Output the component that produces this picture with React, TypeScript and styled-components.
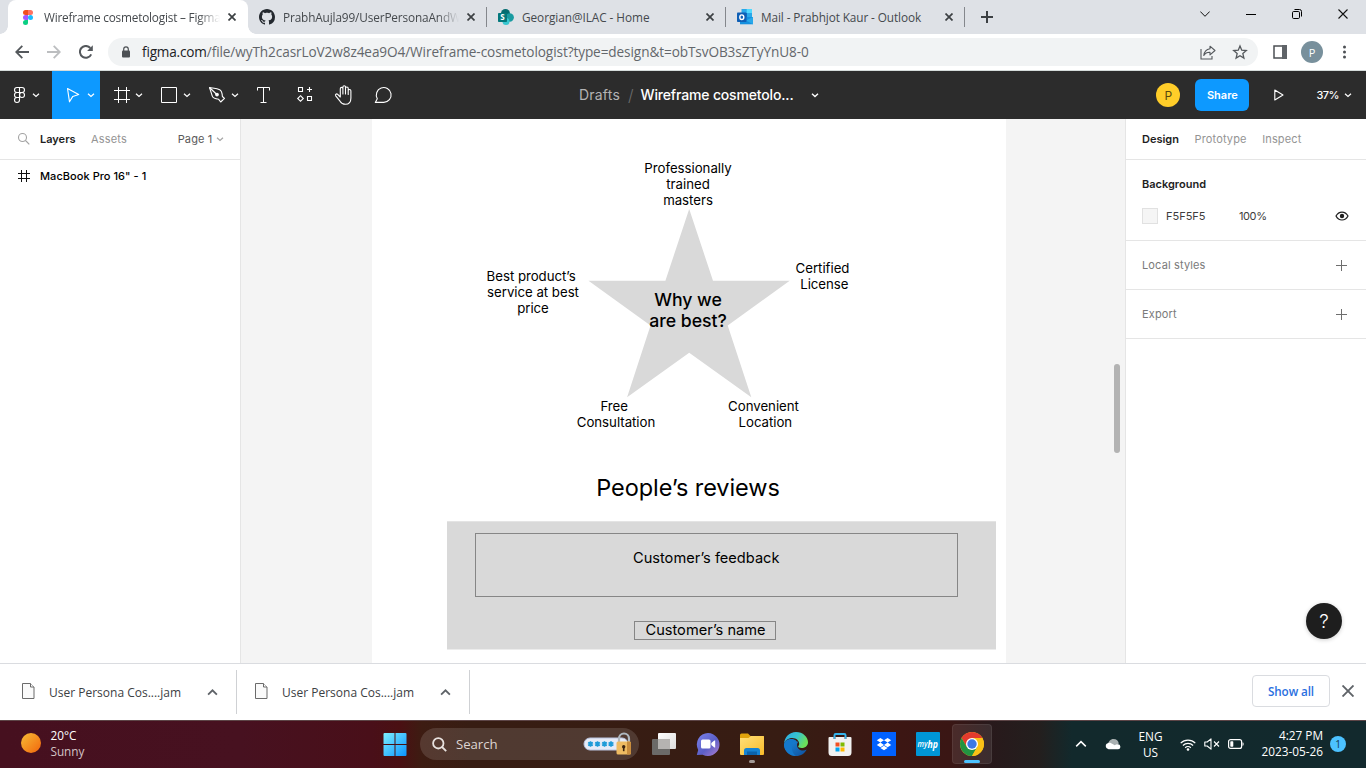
import React from "react";
import styled, { createGlobalStyle, css } from "styled-components";

const ui = `"Open Sans", "Noto Sans", sans-serif`;
const inter = `Inter, "Liberation Sans", sans-serif`;

const GlobalStyle = createGlobalStyle`
  *, *::before, *::after { box-sizing: border-box; }
  body { margin: 0; overflow: hidden; background: #fff; }
  svg { display: block; flex: none; }
`;

const Screen = styled.div`
  display: flex;
  flex-direction: column;
  width: 1366px;
  height: 768px;
  overflow: hidden;
  font-family: ${ui};
`;

/* ---------- Browser chrome ---------- */

const TabStrip = styled.header`
  display: flex;
  height: 34px;
  padding-left: 8px;
  background: #dee1e6;
`;

const Tab = styled.div<{ $active?: boolean }>`
  position: relative;
  display: flex;
  align-items: center;
  width: ${(p) => (p.$active ? 240 : 239)}px;
  padding: 0 12px 0 ${(p) => (p.$active ? 12 : 11)}px;
  ${(p) =>
    p.$active
      ? css`
          background: #fff;
          border-radius: 8px 8px 0 0;
          &::before,
          &::after {
            content: "";
            position: absolute;
            bottom: 0;
            width: 8px;
            height: 8px;
          }
          &::before {
            left: -8px;
            background: radial-gradient(circle at 0 0, transparent 7.5px, #fff 8px);
          }
          &::after {
            right: -8px;
            background: radial-gradient(circle at 100% 0, transparent 7.5px, #fff 8px);
          }
        `
      : css`
          &::after {
            content: "";
            position: absolute;
            right: 0;
            top: 7px;
            width: 1px;
            height: 20px;
            background: #84878c;
          }
        `}
`;

const TabTitle = styled.span<{ $fade?: boolean; $track?: number }>`
  flex: 1;
  min-width: 0;
  margin: 0 8px;
  overflow: hidden;
  white-space: nowrap;
  font-size: 11.8px;
  line-height: 20px;
  letter-spacing: ${(p) => p.$track ?? -0.1}px;
  color: #45494d;
  ${(p) =>
    p.$fade &&
    css`
      mask-image: linear-gradient(90deg, #000 calc(100% - 22px), transparent);
    `}
`;

const NewTab = styled.div`
  display: flex;
  align-items: center;
  padding-left: 16px;
`;

const WindowControls = styled.div`
  display: flex;
  align-items: center;
  height: 28px;
  margin-left: auto;
`;

const WindowButton = styled.div`
  display: flex;
  align-items: center;
  justify-content: center;
  width: 46px;
  height: 28px;
`;

const AddressBar = styled.div`
  display: flex;
  align-items: center;
  height: 37px;
  padding: 0 14px 0 6px;
  background: #fff;
  border-bottom: 1px solid #d5dcdb;
`;

const NavButton = styled.div`
  display: flex;
  align-items: center;
  justify-content: center;
  width: 32px;
  height: 28px;
`;

const Omnibox = styled.div`
  display: flex;
  align-items: center;
  width: 1150px;
  height: 28px;
  margin: 0 15px 0 6px;
  padding: 0 10px 0 13px;
  border-radius: 14px;
  background: #f1f3f4;
`;

const Url = styled.span`
  flex: 1;
  margin-left: 11px;
  font-size: 13.6px;
  letter-spacing: -0.09px;
  line-height: 20px;
  white-space: nowrap;
  color: #63676b;
`;

const Host = styled.span`
  letter-spacing: -0.18px;
  color: #202124;
`;

const OmniActions = styled.div`
  display: flex;
  align-items: center;
  gap: 16px;
`;

const Profile = styled.div`
  display: flex;
  align-items: center;
  justify-content: center;
  width: 22px;
  height: 22px;
  margin: 0 20px 0 14px;
  border-radius: 50%;
  background: #78909c;
  color: #fff;
  font-size: 11px;
`;

/* ---------- Editor toolbar ---------- */

const EditorBar = styled.div`
  display: grid;
  grid-template-columns: 560px 1fr auto;
  height: 48px;
  background: #2c2c2c;
  color: #fff;
  font-family: ${inter};
`;

const Tools = styled.div`
  display: flex;
`;

const DropTool = styled.div<{ $active?: boolean; $menu?: boolean }>`
  display: flex;
  align-items: center;
  gap: ${(p) => (p.$menu ? 2 : 3)}px;
  width: ${(p) => (p.$menu ? 52 : 48)}px;
  padding-left: ${(p) => (p.$menu ? 10 : 12)}px;
  background: ${(p) => (p.$active ? "#0d99ff" : "transparent")};
`;

const Tool = styled.div`
  display: flex;
  align-items: center;
  justify-content: center;
  width: 40px;
`;

const FileTitle = styled.div`
  display: flex;
  align-items: center;
  padding: 0 0 1px 19px;
  font-size: 14px;
  white-space: nowrap;
`;

const Folder = styled.span`
  letter-spacing: 0.2px;
  color: #b3b3b3;
`;

const Slash = styled.span`
  margin: 0 7px 0 8px;
  color: #6c6c6c;
  font-size: 16px;
  font-weight: 300;
`;

const FileName = styled.span`
  margin-right: 17px;
  font-weight: 500;
  letter-spacing: -0.16px;
`;

const BarActions = styled.div`
  display: flex;
  align-items: center;
  justify-content: flex-end;
  padding-right: 14px;
`;

const UserBadge = styled.div`
  display: flex;
  align-items: center;
  justify-content: center;
  width: 24px;
  height: 24px;
  border-radius: 50%;
  background: #ffcd29;
  color: #58470e;
  font-size: 12px;
`;

const ShareButton = styled.div`
  display: flex;
  align-items: center;
  justify-content: center;
  width: 54px;
  height: 32px;
  margin: 0 25px 0 15px;
  border-radius: 6px;
  background: #0d99ff;
  font-size: 11px;
  font-weight: 600;
`;

const Zoom = styled.span`
  margin: 0 5px 0 32px;
  font-size: 11px;
  font-weight: 500;
  letter-spacing: -0.5px;
`;

/* ---------- Workspace ---------- */

const Workspace = styled.main`
  display: flex;
  height: 544px;
  font-family: ${inter};
`;

const LeftPanel = styled.aside`
  width: 241px;
  border-right: 1px solid #e5e5e5;
`;

const PanelTabs = styled.div`
  display: flex;
  align-items: center;
  height: 41px;
  padding: 0 16px;
  border-bottom: 1px solid #e5e5e5;
`;

const PanelTab = styled.span<{ $active?: boolean }>`
  margin-right: 15.5px;
  font-size: 11px;
  line-height: 16px;
  font-weight: ${(p) => (p.$active ? 600 : 400)};
  letter-spacing: ${(p) => (p.$active ? 0 : 0.15)}px;
  color: ${(p) => (p.$active ? "#1e1e1e" : "#949494")};
`;

const SearchSlot = styled.div`
  margin-right: 10px;
`;

const PageName = styled.span`
  margin: 0 3.5px 0 auto;
  font-size: 11px;
  letter-spacing: 0.15px;
  color: #5a5a5a;
`;

const LayerRow = styled.div`
  display: flex;
  align-items: center;
  gap: 10px;
  height: 32px;
  padding-left: 18px;
  font-size: 11px;
  font-weight: 500;
  letter-spacing: 0.05px;
  color: #000;
`;

const Canvas = styled.section`
  position: relative;
  width: 884px;
  overflow: hidden;
  background: #f4f4f4;
`;

const Artboard = styled.div`
  position: absolute;
  left: 131px;
  top: 0;
  width: 634px;
  height: 544px;
  background: #fff;
`;

const StarShape = styled.svg`
  position: absolute;
  left: 216px;
  top: 90px;
`;

const Label = styled.div<{ $x: number; $y: number }>`
  position: absolute;
  left: ${(p) => p.$x}px;
  top: ${(p) => p.$y}px;
  transform: translateX(-50%);
  white-space: pre;
  text-align: center;
  font-size: 13.25px;
  line-height: 16px;
  letter-spacing: -0.03px;
  color: #000;
`;

const StarTitle = styled(Label)`
  font-size: 17.7px;
  line-height: 21.3px;
  font-weight: 450;
`;

const SectionTitle = styled(Label)`
  font-size: 23.5px;
  line-height: 30px;
  letter-spacing: -0.08px;
`;

const ReviewCard = styled.div`
  position: absolute;
  left: 75px;
  top: 402px;
  display: flex;
  flex-direction: column;
  align-items: flex-start;
  width: 549px;
  height: 129px;
  padding: 12px 0 0 28px;
  border-top: 1px solid #e4e4e4;
  border-bottom: 1px solid #ececec;
  background: #d9d9d9;
  font-size: 14.6px;
  line-height: 18px;
  color: #000;
`;

const Feedback = styled.div`
  width: 483px;
  height: 64px;
  margin-top: -1px;
  padding: 15px 0 0 157px;
  border: 1px solid #868686;
`;

const Customer = styled.div`
  width: 142px;
  height: 19px;
  margin: 24px 0 0 159px;
  padding-left: 1px;
  border: 1px solid #868686;
  line-height: 17px;
  text-align: center;
`;

const ScrollThumb = styled.div`
  position: absolute;
  right: 5px;
  top: 245px;
  width: 6px;
  height: 89px;
  border-radius: 3px;
  background: #b3b3b3;
`;

const RightPanel = styled.aside`
  position: relative;
  width: 241px;
  border-left: 1px solid #e5e5e5;
  font-size: 11px;
`;

const Section = styled.div`
  display: flex;
  align-items: center;
  justify-content: space-between;
  height: 49px;
  padding: 0 19px 0 16px;
  border-bottom: 1px solid #e5e5e5;
  letter-spacing: 0.14px;
  color: #7a7a7a;
`;

const BackgroundSection = styled.div`
  height: 81px;
  padding: 16px 16px 0;
  border-bottom: 1px solid #e5e5e5;
`;

const SectionHeading = styled.div`
  line-height: 16px;
  font-weight: 600;
  color: #1e1e1e;
`;

const ColorRow = styled.div`
  display: flex;
  align-items: center;
  margin-top: 16px;
  height: 16px;
  color: #3d3d3d;
`;

const Swatch = styled.div`
  width: 16px;
  height: 16px;
  border: 1px solid #e1e1e1;
  background: #f5f5f5;
`;

const Hex = styled.span`
  width: 73px;
  margin-left: 8px;
`;

const Opacity = styled.span`
  flex: 1;
  letter-spacing: -0.4px;
`;

const HelpButton = styled.div`
  position: absolute;
  right: 24px;
  bottom: 24px;
  display: flex;
  align-items: center;
  justify-content: center;
  width: 36px;
  height: 36px;
  border-radius: 50%;
  background: #1e1e1e;
  box-shadow: 0 1px 4px rgba(0, 0, 0, 0.2);
  color: #fff;
  font-size: 19px;
  font-weight: 300;
`;

/* ---------- Downloads shelf ---------- */

const Shelf = styled.div`
  display: flex;
  align-items: center;
  height: 57px;
  padding-right: 12px;
  border-top: 1px solid #dadce0;
  background: #fff;
`;

const Download = styled.div<{ $first?: boolean }>`
  display: flex;
  align-items: center;
  width: ${(p) => (p.$first ? 237 : 233)}px;
  height: 44px;
  padding-left: ${(p) => (p.$first ? 22 : 18)}px;
  border-right: 1px solid #cfd1d4;
`;

const DownloadName = styled.span`
  flex: 1;
  margin-left: 14px;
  font-size: 12px;
  color: #3c4043;
`;

const ChevronSlot = styled.div`
  margin-right: 18px;
`;

const FileSlot = styled.div`
  padding-bottom: 2px;
`;

const ShelfActions = styled.div`
  display: flex;
  align-items: center;
  gap: 12px;
  margin: -3px 0 0 auto;
`;

const ShowAll = styled.div`
  display: flex;
  align-items: center;
  justify-content: center;
  width: 78px;
  height: 32px;
  border: 1px solid #dadce0;
  border-radius: 4px;
  color: #2a6fe0;
  font-size: 11.7px;
  font-weight: 600;
  letter-spacing: -0.1px;
`;

/* ---------- Taskbar ---------- */

const Taskbar = styled.footer`
  display: grid;
  grid-template-columns: 373px 1fr 340px;
  height: 48px;
  border-top: 1px solid #5d4547;
  color: #fff;
  background: linear-gradient(
    90deg,
    #46101f 0,
    #471120 240px,
    #490f19 370px,
    #4a1013 400px,
    #3d1c12 422px,
    #371d13 470px,
    #371c13 800px,
    #3c1613 900px,
    #3a1614 950px,
    #28191b 990px,
    #231f1e 1040px,
    #12292c 1072px,
    #12292d 1366px
  );
`;

const Weather = styled.div`
  display: flex;
  align-items: center;
  gap: 9.500px;
  padding: 0 0 3px 21px;
`;

const TwoLines = styled.div<{ $align?: string; $dimSecond?: boolean }>`
  display: flex;
  flex-direction: column;
  text-align: ${(p) => p.$align ?? "left"};
  font-size: 11.8px;
  line-height: 16px;
  letter-spacing: -0.05px;
  span:last-child {
    color: ${(p) => (p.$dimSecond ? "#d3c4c7" : "#fff")};
  }
`;

const Clock = styled(TwoLines)`
  padding-bottom: 3px;
  letter-spacing: 0;
`;

const Apps = styled.div`
  display: flex;
  align-items: center;
  padding-bottom: 1px;
`;

const AppSlot = styled.div<{ $open?: boolean; $active?: boolean }>`
  position: relative;
  display: flex;
  align-items: center;
  justify-content: center;
  width: 44px;
  height: 46px;
  ${(p) =>
    p.$active &&
    css`
      &::before {
        content: "";
        position: absolute;
        inset: 3px 2px 3px;
        border: 1px solid rgba(255, 255, 255, 0.07);
        border-radius: 4px;
        background: rgba(255, 255, 255, 0.09);
      }
    `}
  ${(p) =>
    (p.$open || p.$active) &&
    css`
      &::after {
        content: "";
        position: absolute;
        bottom: 4px;
        width: ${p.$active ? 16 : 6}px;
        height: 3px;
        border-radius: 2px;
        background: ${p.$active ? "#4cc2ff" : "#a39a96"};
      }
    `}
  svg {
    position: relative;
  }
`;

const SearchBox = styled.div`
  display: flex;
  align-items: center;
  width: 219px;
  height: 32px;
  margin: 0 3px;
  padding: 0 6px 0 12px;
  border-radius: 16px;
  background: rgba(255, 255, 255, 0.13);
`;

const SearchText = styled.span`
  flex: 1;
  margin-left: 9px;
  font-size: 13.2px;
  letter-spacing: -0.05px;
  color: #ddd5d1;
`;

const Tray = styled.div`
  display: flex;
  align-items: center;
  justify-content: flex-end;
  padding: 0 20px 1px 0;
`;

const TraySlot = styled.div<{ $gap: number }>`
  margin-right: ${(p) => p.$gap}px;
`;

const Count = styled.div`
  display: flex;
  align-items: center;
  justify-content: center;
  width: 16px;
  height: 16px;
  margin-left: 7px;
  border-radius: 50%;
  background: #4cc2ff;
  color: #12394d;
  font-size: 10px;
`;

/* ---------- Icons ---------- */

type ChevronProps = { color?: string; size?: number; up?: boolean; weight?: number };
const Chevron = ({ color = "#fff", size = 8, up, weight = 1.2 }: ChevronProps) => (
  <svg width={size} height={size} viewBox="0 0 8 8" fill="none" stroke={color} strokeWidth={weight}>
    <path d={up ? "M.8 5.6 4 2.4 7.2 5.6" : "M1 2.7 4 5.5 7 2.7"} />
  </svg>
);

const Cross = ({ size = 8, color = "#3c4043", weight = 1.7 }) => (
  <svg width={size} height={size} viewBox={`0 0 ${size} ${size}`} stroke={color} strokeWidth={weight}>
    <path d={`M.5.5 ${size - 0.5} ${size - 0.5}M${size - 0.5}.5.5 ${size - 0.5}`} />
  </svg>
);

const FigmaFavicon = () => (
  <svg width="16" height="16" viewBox="0 0 16 16">
    <path d="M5.5 1H8v5H5.5a2.5 2.5 0 0 1 0-5z" fill="#f24e1e" />
    <path d="M8 1h2.5a2.5 2.5 0 0 1 0 5H8z" fill="#ff7262" />
    <path d="M5.5 6H8v5H5.5a2.5 2.5 0 0 1 0-5z" fill="#a259ff" />
    <circle cx="10.5" cy="8.5" r="2.5" fill="#1abcfe" />
    <path d="M5.5 11H8v2.5A2.5 2.5 0 1 1 5.5 11z" fill="#0acf83" />
  </svg>
);

const GithubFavicon = () => (
  <svg width="16" height="16" viewBox="0 0 16 16" fill="#24292f">
    <path d="M8 0C3.58 0 0 3.58 0 8c0 3.54 2.29 6.53 5.47 7.59.4.07.55-.17.55-.38 0-.19-.01-.82-.01-1.49-2.01.37-2.53-.49-2.69-.94-.09-.23-.48-.94-.82-1.13-.28-.15-.68-.52-.01-.53.63-.01 1.08.58 1.23.82.72 1.21 1.87.87 2.33.66.07-.52.28-.87.51-1.07-1.78-.2-3.64-.89-3.64-3.95 0-.87.31-1.59.82-2.15-.08-.2-.36-1.02.08-2.12 0 0 .67-.21 2.2.82.64-.18 1.32-.27 2-.27s1.36.09 2 .27c1.53-1.04 2.2-.82 2.2-.82.44 1.1.16 1.92.08 2.12.51.56.82 1.27.82 2.15 0 3.07-1.87 3.75-3.65 3.95.29.25.54.73.54 1.48 0 1.07-.01 1.93-.01 2.2 0 .21.15.46.55.38A8.01 8.01 0 0 0 16 8c0-4.42-3.58-8-8-8z" />
  </svg>
);

const SharepointFavicon = () => (
  <svg width="16" height="16" viewBox="0 0 16 16">
    <circle cx="7.5" cy="4.5" r="4.5" fill="#036c70" />
    <circle cx="11.7" cy="8.5" r="4.2" fill="#1a9ba1" />
    <circle cx="8" cy="12.5" r="3.5" fill="#37c6d0" />
    <rect y="4" width="9" height="9" rx=".8" fill="#03787c" />
    <text x="4.5" y="11.3" textAnchor="middle" fontFamily="Open Sans" fontWeight="700" fontSize="8" fill="#fff">S</text>
  </svg>
);

const OutlookFavicon = () => (
  <svg width="16" height="16" viewBox="0 0 16 16">
    <path d="M4.5 0H15v8H4.5z" fill="#28a8ea" />
    <path d="M9.7 0H15v4H9.7z" fill="#50d9ff" />
    <path d="M4.5 4h5.2v4H4.5z" fill="#0364b8" />
    <path d="M3 8h13v7.3H3z" fill="#1490df" />
    <path d="M16 8v7.3L9 11.5z" fill="#28a8ea" />
    <rect y="3.5" width="9.5" height="9.5" rx=".8" fill="#0f5fb5" />
    <ellipse cx="4.8" cy="8.2" rx="2" ry="2.3" fill="none" stroke="#fff" strokeWidth="1.4" />
  </svg>
);

const ToolIcon = ({ children, weight = 1 }: { children: React.ReactNode; weight?: number }) => (
  <svg width="20" height="20" viewBox="0 0 20 20" fill="none" stroke="#fff" strokeWidth={weight}>
    {children}
  </svg>
);

const FileIcon = () => (
  <svg width="13" height="16" viewBox="0 0 13 16" fill="#fafafa" stroke="#6b6b6b">
    <path d="M.5.5H8.5L12 4v11.5H.5z" />
    <path d="M8.5.5V4H12" />
  </svg>
);

const Plus = () => (
  <svg width="11" height="11" viewBox="0 0 11 11" stroke="#6e6e6e">
    <path d="M5.5 0v11M0 5.5h11" />
  </svg>
);

const WindowsLogo = () => (
  <svg width="24" height="24" viewBox="-0.5 -1 24 24">
    <defs>
      <linearGradient id="win" x1="0" y1="0" x2="1" y2="1">
        <stop offset="0" stopColor="#7df0ff" />
        <stop offset="1" stopColor="#0a93ff" />
      </linearGradient>
    </defs>
    <path fill="url(#win)" d="M0 1a1 1 0 0 1 1-1h10v11H0zM12 0h10a1 1 0 0 1 1 1v10H12zM0 12h11v11H1a1 1 0 0 1-1-1zM12 12h11v10a1 1 0 0 1-1 1H12z" />
  </svg>
);

const PasswordArt = () => (
  <svg width="50" height="24" viewBox="0 0 50 24">
    <rect x="1" y="6" width="44" height="12" rx="6" fill="#e6ebf7" stroke="#b9c4e0" />
    <g stroke="#1f9bd8" strokeWidth="1.7">
      {[7.5, 14.5, 21.5, 28].map((x) => (
        <path key={x} d={`M${x} 9.2v5.6M${x - 2.4} 10.6l4.8 2.8M${x + 2.4} 10.6l-4.8 2.8`} />
      ))}
    </g>
    <path d="M36 12V6.5a5 5 0 0 1 10 0V12" fill="none" stroke="#aeb8c0" strokeWidth="2.2" />
    <rect x="33.5" y="9.5" width="14.5" height="13" rx="1.5" fill="#eebb62" />
    <path d="M44 9.5h2.5a1.5 1.5 0 0 1 1.5 1.5v10a1.5 1.5 0 0 1-1.5 1.5H44z" fill="#c98d3d" />
    <circle cx="40.7" cy="14.8" r="1.7" fill="#3d2410" />
    <path d="M39.9 15h1.6v4.2h-1.6z" fill="#3d2410" />
  </svg>
);

const TaskViewIcon = () => (
  <svg width="24" height="24" viewBox="0 0 24 24">
    <defs>
      <linearGradient id="tv" x1="0" y1="0" x2="1" y2="1">
        <stop offset="0" stopColor="#fff" />
        <stop offset="1" stopColor="#dcdcdc" />
      </linearGradient>
    </defs>
    <rect x="6" y="1" width="18" height="16" rx="1" fill="url(#tv)" />
    <rect y="7" width="18" height="16" rx="1" fill="#6b6a68" />
    <path d="M6 7h12v10H6z" fill="#b5b3b1" />
  </svg>
);

const ChatIcon = () => (
  <svg width="24" height="24" viewBox="0 0 24 24">
    <defs>
      <linearGradient id="chat" x1="0" y1="0" x2="1" y2="1">
        <stop offset="0" stopColor="#7b83eb" />
        <stop offset=".55" stopColor="#5b5fc7" />
        <stop offset="1" stopColor="#b07fd0" />
      </linearGradient>
    </defs>
    <path d="M12 1a11.5 11.5 0 1 1-5.300 21.700L.8 23l1.400-5A11.500 11.500 0 0 1 12 1z" fill="url(#chat)" />
    <rect x="5" y="7.5" width="9.5" height="9" rx="1.5" fill="#fff" />
    <path d="M15.3 11l3-2.5h.9v7h-.9l-3-2.5z" fill="#fff" />
  </svg>
);

const FolderIcon = () => (
  <svg width="24" height="24" viewBox="0 0 24 24">
    <defs>
      <linearGradient id="fold" x1="0" y1="0" x2="1" y2="1">
        <stop offset="0" stopColor="#ffe07a" />
        <stop offset="1" stopColor="#f9bb2a" />
      </linearGradient>
    </defs>
    <path d="M0 3a1.5 1.5 0 0 1 1.5-1.5H8L10.500 4H24v6H0z" fill="#e0a30c" />
    <path d="M0 6h8.500L11 4h12a1 1 0 0 1 1 1v17a1 1 0 0 1-1 1H1a1 1 0 0 1-1-1z" fill="url(#fold)" />
    <path d="M4 23v-4.500A2.500 2.500 0 0 1 6.500 16h11a2.500 2.500 0 0 1 2.500 2.500V23z" fill="#1583d3" />
    <path d="M7 19.500h10V23H7z" fill="#0b63ab" />
  </svg>
);

const EdgeIcon = () => (
  <svg width="24" height="24" viewBox="0 0 24 24">
    <defs>
      <linearGradient id="edgeTop" x1="0" y1="0" x2="1" y2=".4">
        <stop offset="0" stopColor="#2aa9e6" />
        <stop offset=".55" stopColor="#37c3cf" />
        <stop offset="1" stopColor="#6be05a" />
      </linearGradient>
      <linearGradient id="edgeLow" x1="0" y1="0" x2="1" y2="1">
        <stop offset="0" stopColor="#1b8ddf" />
        <stop offset="1" stopColor="#0f4f9c" />
      </linearGradient>
    </defs>
    <path d="M0 12A12 12 0 0 0 12 24c5 0 9-2.700 10.700-6.500-4 2.300-9.700.5-9.700-4.500 0-2 1.200-3 1.200-3L8 7z" fill="url(#edgeLow)" />
    <path d="M7.800 15c-.3-4 1.800-6 4.500-6.200C9 5.500 1 6.500 0 12c-.3 7 5.500 12 12 12-2.800-1.500-4-5-4.200-9z" fill="#1478cb" />
    <path d="M0 11.500C.6 5 5.500 0 12 0c7 0 12 5 12 10.200 0 4-3.500 5.800-6.500 5.800-2 0-3.500-.8-3.300-1.500.2-.6 1-1.200 1-2.800C15.200 9 12.500 6 8.500 6 4 6 1 8.500 0 11.500z" fill="url(#edgeTop)" />
  </svg>
);

const StoreIcon = () => (
  <svg width="24" height="24" viewBox="0 0 24 24">
    <path d="M6.500 7V3.200A1.200 1.200 0 0 1 7.700 2h8.600a1.200 1.200 0 0 1 1.200 1.200V7" fill="none" stroke="#35b4ec" strokeWidth="2" />
    <path d="M.5 6a1 1 0 0 1 1-1h4v2h2V5h9v2h2V5h4a1 1 0 0 1 1 1v14.500a3.500 3.500 0 0 1-3.500 3.500H4a3.500 3.500 0 0 1-3.500-3.500z" fill="#f1f1f1" />
    <path d="M7.500 10.500h4v4h-4z" fill="#f25022" />
    <path d="M12.500 10.500h4v4h-4z" fill="#7fba00" />
    <path d="M7.500 15.500h4v4h-4z" fill="#00a4ef" />
    <path d="M12.500 15.500h4v4h-4z" fill="#ffb900" />
  </svg>
);

const DropboxIcon = () => (
  <svg width="24" height="24" viewBox="0 0 24 24">
    <path d="M0 0h24v24H0z" fill="#0061ff" />
    <path fill="#fff" d="M8.400 6 4.800 8.300l3.600 2.300L12 8.300zM15.600 6 12 8.300l3.600 2.300 3.600-2.300zM4.800 12.900l3.600 2.300 3.600-2.300-3.600-2.300zM15.600 10.600 12 12.900l3.600 2.300 3.600-2.300zM8.400 16l3.600 2.300 3.600-2.300-3.600-2.300z" />
  </svg>
);

const HpIcon = () => (
  <svg width="24" height="24" viewBox="0 0 24 24">
    <rect width="24" height="24" rx="1" fill="#0096d6" />
    <text x="1.500" y="14.500" fontFamily="Open Sans" fontStyle="italic" fontWeight="600" fontSize="8" textLength="10" lengthAdjust="spacingAndGlyphs" fill="#fff">my</text>
    <text x="11.500" y="15.500" fontFamily="Open Sans" fontStyle="italic" fontWeight="700" fontSize="11" textLength="10.500" lengthAdjust="spacingAndGlyphs" fill="#fff">hp</text>
  </svg>
);

const ChromeIcon = () => (
  <svg width="24" height="24" viewBox="0 0 24 24">
    <circle cx="12" cy="12" r="12" fill="#fbc116" />
    <path d="M12 6h10.390A12 12 0 0 0 1.610 6L6.800 15z" fill="#e33b2e" />
    <path d="M1.610 6A12 12 0 0 0 12 24l5.200-9H6.800z" fill="#229342" />
    <path d="M12 24A12 12 0 0 0 22.390 6H12l5.200 9z" fill="#fbc116" />
    <circle cx="12" cy="12" r="6" fill="#fff" />
    <circle cx="12" cy="12" r="4.700" fill="#3c78e6" />
  </svg>
);

export default function App() {
  return (
    <Screen>
      <GlobalStyle />
      <TabStrip>
        <Tab $active>
          <FigmaFavicon />
          <TabTitle $fade $track={-0.2}>Wireframe cosmetologist – Figma</TabTitle>
          <Cross />
        </Tab>
        <Tab>
          <GithubFavicon />
          <TabTitle $fade $track={-0.13}>PrabhAujla99/UserPersonaAndWi</TabTitle>
          <Cross />
        </Tab>
        <Tab>
          <SharepointFavicon />
          <TabTitle $track={-0.05}>Georgian@ILAC - Home</TabTitle>
          <Cross />
        </Tab>
        <Tab>
          <OutlookFavicon />
          <TabTitle>Mail - Prabhjot Kaur - Outlook</TabTitle>
          <Cross />
        </Tab>
        <NewTab>
          <svg width="12" height="12" viewBox="0 0 12 12" stroke="#3c4043" strokeWidth="2">
            <path d="M6 0v12M0 6h12" />
          </svg>
        </NewTab>
        <WindowControls>
          <WindowButton>
            <svg width="10" height="6" viewBox="0 0 10 6" fill="none" stroke="#111">
              <path d="M.3.5 5 5.300 9.700.5" />
            </svg>
          </WindowButton>
          <WindowButton>
            <svg width="10" height="2" viewBox="0 0 10 2">
              <path d="M0 1h10v1H0z" />
            </svg>
          </WindowButton>
          <WindowButton>
            <svg width="10" height="10" viewBox="0 0 10 10" fill="none" stroke="#000">
              <rect x=".5" y="2.500" width="7" height="7" rx="1.200" />
              <path d="M2.500.5H7.500a2 2 0 0 1 2 2V7.500" />
            </svg>
          </WindowButton>
          <WindowButton>
            <Cross size={10} color="#111" weight={1.1} />
          </WindowButton>
        </WindowControls>
      </TabStrip>

      <AddressBar>
        <NavButton>
          <svg width="14" height="14" viewBox="0 0 14 14" fill="none" stroke="#54585c" strokeWidth="1.800">
            <path d="M14 7H1.500M7.300.8 1.200 7l6.100 6.200" />
          </svg>
        </NavButton>
        <NavButton>
          <svg width="14" height="14" viewBox="0 0 14 14" fill="none" stroke="#bcbec0" strokeWidth="1.800">
            <path d="M0 7h12.500M6.700.8 12.800 7l-6.100 6.200" />
          </svg>
        </NavButton>
        <NavButton>
          <svg width="14" height="14" viewBox="0 0 14 14" fill="none" stroke="#54585c" strokeWidth="2">
            <path d="M12.200 9.300A5.900 5.900 0 1 1 11.300 3" />
            <path d="M13.800.3V6H8.100z" fill="#54585c" stroke="none" />
          </svg>
        </NavButton>
        <Omnibox>
          <svg width="10" height="12" viewBox="0 0 10 12">
            <rect x="1" y="4.500" width="8" height="7" rx="1" fill="#4c5054" />
            <path d="M2.700 5V3.200a2.300 2.300 0 0 1 4.600 0V5" fill="none" stroke="#4c5054" strokeWidth="1.200" />
          </svg>
          <Url>
            <Host>figma.com</Host>/file/wyTh2casrLoV2w8z4ea9O4/Wireframe-cosmetologist?type=design&amp;t=obTsvOB3sZTyYnU8-0
          </Url>
          <OmniActions>
            <svg width="16" height="15" viewBox="0 0 16 15" fill="none" stroke="#54585c" strokeWidth="1.100">
              <path d="M1 4v10h11v-3" />
              <path d="M10 1.200 15 5.500 10 9.800V7.300C7 7.200 5 8.400 3.800 10.500 4.200 7 6 4.200 10 3.700z" strokeLinejoin="round" />
            </svg>
            <svg width="16" height="16" viewBox="0 0 16 16" fill="none" stroke="#54585c" strokeWidth="1.300">
              <path d="M8 2l1.750 4.200 4.550.4-3.450 3 1.050 4.450L8 11.700l-3.900 2.350L5.150 9.600 1.700 6.600l4.550-.4z" />
            </svg>
          </OmniActions>
        </Omnibox>
        <svg width="14" height="14" viewBox="0 0 14 14">
          <path d="M1 1h12v12H1z" fill="#fff" stroke="#4c5054" strokeWidth="1.500" />
          <path d="M9 0h5v14H9z" fill="#5f6368" />
        </svg>
        <Profile>P</Profile>
        <svg width="4" height="14" viewBox="0 0 4 14" fill="#4c5054">
          <circle cx="1.500" cy="2" r="1.500" />
          <circle cx="1.500" cy="7" r="1.500" />
          <circle cx="1.500" cy="12" r="1.500" />
        </svg>
      </AddressBar>

      <EditorBar>
        <Tools>
          <DropTool $menu>
            <ToolIcon weight={1.1}>
              <path d="M9.500 2.500H7a2.500 2.500 0 0 0 0 5h2.500zM9.500 2.500H12a2.500 2.500 0 0 1 0 5H9.500zM9.500 7.500H7a2.500 2.500 0 0 0 0 5h2.500zM9.500 12.500H7A2.500 2.500 0 1 0 9.500 15z" />
              <circle cx="12" cy="10" r="2.500" />
            </ToolIcon>
            <Chevron />
          </DropTool>
          <DropTool $active>
            <ToolIcon weight={1.1}>
              <path d="M3.500 3.500 14.700 9.500 8.800 11.400 5.500 16.800z" strokeLinejoin="round" />
            </ToolIcon>
            <Chevron />
          </DropTool>
          <DropTool>
            <ToolIcon>
              <path d="M6.500 2v16M14.500 2v16M2 5.500h16M2 14.500h16" />
            </ToolIcon>
            <Chevron />
          </DropTool>
          <DropTool>
            <ToolIcon>
              <path d="M1.500 2.500h15v15h-15z" />
            </ToolIcon>
            <Chevron />
          </DropTool>
          <DropTool>
            <ToolIcon weight={1.1}>
              <path d="M1.500 2.500 4.300 11.200C4.900 13.200 7.500 14 10.700 14.300L12.700 17 16.500 13.400 14.400 11.500C14.200 8 13.600 5.800 11.700 4.800 9 3.400 5 3.200 1.500 2.500z" strokeLinejoin="round" />
              <path d="M1.500 2.500 8.300 9" />
              <circle cx="9" cy="9.600" r="1.300" fill="#fff" />
            </ToolIcon>
            <Chevron />
          </DropTool>
          <Tool>
            <ToolIcon>
              <path d="M3.500 5.500v-3h12v3M9.500 2.500v15M6.500 17.500h6" />
            </ToolIcon>
          </Tool>
          <Tool>
            <ToolIcon weight={1.1}>
              <path d="M4.500 2.500h4v4h-4zM13.500 11.500h4v4h-4zM15.500 2v5M13 4.500h5M6.500 10.700l2.800 2.800-2.800 2.800-2.800-2.800z" />
            </ToolIcon>
          </Tool>
          <Tool>
            <ToolIcon weight={1.1}>
              <path
                strokeLinecap="round"
                strokeLinejoin="round"
                d="M6.300 12V3.700a1.300 1.300 0 0 1 2.600 0V9M8.900 3.700V2a1.300 1.300 0 0 1 2.600 0V9M11.500 3.300a1.300 1.300 0 0 1 2.700 0V9.500M14.200 5.800a1.300 1.300 0 0 1 2.700 0V13c0 3.600-2 6.300-5.500 6.300-3 0-4.300-1.300-5.400-3.100L1.700 10.800c-.8-1.300.8-2.500 2-1.500L6.300 12"
              />
            </ToolIcon>
          </Tool>
          <Tool>
            <ToolIcon weight={1.1}>
              <path d="M1.300 17.400h8.500a7.400 7.400 0 1 0-6.500-3.700z" strokeLinejoin="round" />
            </ToolIcon>
          </Tool>
        </Tools>
        <FileTitle>
          <Folder>Drafts</Folder>
          <Slash>/</Slash>
          <FileName>Wireframe cosmetolo...</FileName>
          <Chevron weight={1.4} />
        </FileTitle>
        <BarActions>
          <UserBadge>P</UserBadge>
          <ShareButton>Share</ShareButton>
          <svg width="10" height="12" viewBox="0 0 10 12" fill="none" stroke="#fff" strokeWidth="1.100">
            <path d="M.8 1v10L9 6z" strokeLinejoin="round" />
          </svg>
          <Zoom>37%</Zoom>
          <Chevron />
        </BarActions>
      </EditorBar>

      <Workspace>
        <LeftPanel>
          <PanelTabs>
            <SearchSlot>
              <svg width="14" height="14" viewBox="0 0 14 14" fill="none" stroke="#a3a3a3" strokeWidth="1.100">
                <circle cx="6.500" cy="5.500" r="4" />
                <path d="M9.500 8.500 13.300 12.300" />
              </svg>
            </SearchSlot>
            <PanelTab $active>Layers</PanelTab>
            <PanelTab>Assets</PanelTab>
            <PageName>Page 1</PageName>
            <Chevron color="#a5a5a5" />
          </PanelTabs>
          <LayerRow>
            <svg width="12" height="12" viewBox="0 0 12 12" stroke="#111">
              <path d="M3.500 0v12M8.500 0v12M0 3.500h12M0 8.500h12" />
            </svg>
            MacBook Pro 16" - 1
          </LayerRow>
        </LeftPanel>

        <Canvas>
          <Artboard>
            <StarShape width="202" height="190" viewBox="0 0 202 190">
              <path fill="#d9d9d9" d="M101.200 0 125 71.800H201.700L139.700 116.500 163.300 188.300 101.200 143.800 39.100 188.300 62.500 116.500.5 71.800H77.400z" />
            </StarShape>
            <Label $x={316} $y={41}>{"Professionally\ntrained\nmasters"}</Label>
            <Label $x={161} $y={149}>{"Best product’s \nservice at best\nprice"}</Label>
            <Label $x={450.5} $y={141}>{"Certified\n License"}</Label>
            <Label $x={244} $y={279}>{"Free \nConsultation"}</Label>
            <Label $x={391.5} $y={279}>{"Convenient\n Location"}</Label>
            <StarTitle $x={316} $y={170}>{"Why we\nare best?"}</StarTitle>
            <SectionTitle $x={316} $y={354}>People’s reviews</SectionTitle>
            <ReviewCard>
              <Feedback>Customer’s feedback</Feedback>
              <Customer>Customer’s name</Customer>
            </ReviewCard>
          </Artboard>
          <ScrollThumb />
        </Canvas>

        <RightPanel>
          <PanelTabs>
            <PanelTab $active>Design</PanelTab>
            <PanelTab>Prototype</PanelTab>
            <PanelTab>Inspect</PanelTab>
          </PanelTabs>
          <BackgroundSection>
            <SectionHeading>Background</SectionHeading>
            <ColorRow>
              <Swatch />
              <Hex>F5F5F5</Hex>
              <Opacity>100%</Opacity>
              <svg width="16" height="12" viewBox="0 0 16 12">
                <path d="M2 6c2.800-5.300 9.200-5.300 12 0-2.800 5.300-9.200 5.300-12 0z" fill="none" stroke="#1e1e1e" strokeWidth="1.200" />
                <circle cx="8" cy="6" r="2.200" fill="#1e1e1e" />
              </svg>
            </ColorRow>
          </BackgroundSection>
          <Section>
            Local styles
            <Plus />
          </Section>
          <Section>
            Export
            <Plus />
          </Section>
          <HelpButton>?</HelpButton>
        </RightPanel>
      </Workspace>

      <Shelf>
        <Download $first>
          <FileSlot><FileIcon /></FileSlot>
          <DownloadName>User Persona Cos....jam</DownloadName>
          <ChevronSlot>
            <Chevron up size={11} color="#5f6368" weight={1.3} />
          </ChevronSlot>
        </Download>
        <Download>
          <FileSlot><FileIcon /></FileSlot>
          <DownloadName>User Persona Cos....jam</DownloadName>
          <ChevronSlot>
            <Chevron up size={11} color="#5f6368" weight={1.3} />
          </ChevronSlot>
        </Download>
        <ShelfActions>
          <ShowAll>Show all</ShowAll>
          <Cross size={12} color="#5f6368" weight={1.9} />
        </ShelfActions>
      </Shelf>

      <Taskbar>
        <Weather>
          <svg width="20" height="20" viewBox="0 0 20 20">
            <defs>
              <linearGradient id="sun" x1="0" y1="0" x2="1" y2="1">
                <stop offset="0" stopColor="#f6bd36" />
                <stop offset="1" stopColor="#f2650c" />
              </linearGradient>
            </defs>
            <circle cx="10" cy="10" r="10" fill="url(#sun)" />
          </svg>
          <TwoLines $dimSecond>
            <span>20°C</span>
            <span>Sunny</span>
          </TwoLines>
        </Weather>
        <Apps>
          <AppSlot>
            <WindowsLogo />
          </AppSlot>
          <SearchBox>
            <svg width="15" height="15" viewBox="0 0 15 15" fill="none" stroke="#e8e2df" strokeWidth="1.800">
              <circle cx="6.300" cy="6.300" r="5.200" />
              <path d="M10 10 14.200 14.200" />
            </svg>
            <SearchText>Search</SearchText>
            <PasswordArt />
          </SearchBox>
          <AppSlot><TaskViewIcon /></AppSlot>
          <AppSlot><ChatIcon /></AppSlot>
          <AppSlot $open><FolderIcon /></AppSlot>
          <AppSlot><EdgeIcon /></AppSlot>
          <AppSlot><StoreIcon /></AppSlot>
          <AppSlot><DropboxIcon /></AppSlot>
          <AppSlot><HpIcon /></AppSlot>
          <AppSlot $active><ChromeIcon /></AppSlot>
        </Apps>
        <Tray>
          <TraySlot $gap={18}>
            <Chevron up size={12} weight={1} />
          </TraySlot>
          <TraySlot $gap={18}>
            <svg width="16" height="12" viewBox="0 0 16 12">
              <path d="M3 7.500C3 3.500 5.500 1 8.500 1s5 2 5.300 4.500L9 9z" fill="#a9b0b1" />
              <path d="M3.500 11.200a3.200 3.200 0 0 1-.2-6.300c1.700-.4 3.200.4 4.700 1.400l1.800.9c1-.8 1.900-1 2.900-1a2.500 2.500 0 0 1 .3 5z" fill="#fff" />
            </svg>
          </TraySlot>
          <TraySlot $gap={18}>
            <TwoLines $align="center">
              <span>ENG</span>
              <span>US</span>
            </TwoLines>
          </TraySlot>
          <TraySlot $gap={7.5}>
            <svg width="16" height="13" viewBox="0 0 16 13" fill="none" stroke="#fff" strokeWidth="1.200">
              <path d="M.7 5.200a10.300 10.300 0 0 1 14.600 0M2.900 7.500a7.200 7.200 0 0 1 10.200 0M5.200 9.700a4 4 0 0 1 5.600 0" />
              <circle cx="8" cy="11.500" r="1.300" fill="#fff" stroke="none" />
            </svg>
          </TraySlot>
          <TraySlot $gap={8.5}>
            <svg width="16" height="12" viewBox="0 0 16 12" fill="none" stroke="#fff" strokeWidth="1.100">
              <path d="M.8 4h2.400L7 .8v10.400L3.200 8H.8z" strokeLinejoin="round" />
              <path d="M10 3.500l5 5M15 3.500l-5 5" />
            </svg>
          </TraySlot>
          <TraySlot $gap={17}>
            <svg width="16" height="10" viewBox="0 0 16 10">
              <rect x=".6" y=".6" width="13" height="8.800" rx="2" fill="none" stroke="#fff" strokeWidth="1.200" />
              <rect x="2.300" y="2.300" width="3" height="5.400" rx=".6" fill="#fff" />
              <path d="M14.500 3.200c1.500 0 1.500 3.600 0 3.600z" fill="#fff" />
            </svg>
          </TraySlot>
          <Clock $align="right">
            <span>4:27 PM</span>
            <span>2023-05-26</span>
          </Clock>
          <Count>1</Count>
        </Tray>
      </Taskbar>
    </Screen>
  );
}
